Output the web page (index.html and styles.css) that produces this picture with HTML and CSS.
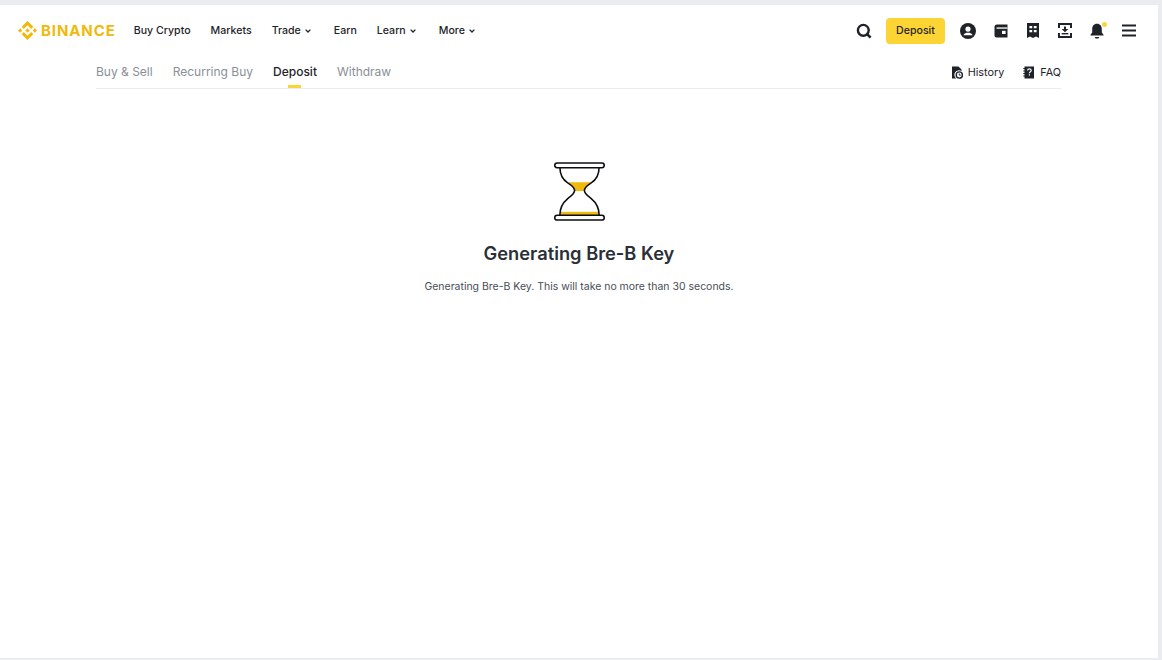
FILE: index.html
```html
<!DOCTYPE html>
<html lang="en">
<head>
<meta charset="utf-8">
<title>Binance</title>
<link rel="stylesheet" href="styles.css">
</head>
<body>
<main class="frame">
  <header class="topbar">
    <div class="brand">
      <svg class="brand-mark" viewBox="0 0 32 32" width="19" height="19" fill="#f0b90b"><path d="M9.8 13.4 L16 7.2 L22.2 13.4 L25.8 9.8 L16 0 L6.2 9.8 Z"/><path d="M0 16 L3.6 12.4 L7.2 16 L3.6 19.6 Z"/><path d="M9.8 18.6 L16 24.8 L22.2 18.6 L25.8 22.2 L16 32 L6.2 22.2 Z"/><path d="M24.8 16 L28.4 12.4 L32 16 L28.4 19.6 Z"/><path d="M19.6 16 L16 12.4 L12.4 16 L16 19.6 Z"/></svg>
      <span class="brand-name">BINANCE</span>
    </div>
    <nav class="mainnav">
      <a>Buy Crypto</a>
      <a>Markets</a>
      <a>Trade<svg class="chev" viewBox="0 0 8 6" width="8" height="6"><path d="M1.6 1.6 L4 4 L6.4 1.6" fill="none" stroke="#1e2329" stroke-width="1.3"/></svg></a>
      <a>Earn</a>
      <a>Learn<svg class="chev" viewBox="0 0 8 6" width="8" height="6"><path d="M1.6 1.6 L4 4 L6.4 1.6" fill="none" stroke="#1e2329" stroke-width="1.3"/></svg></a>
      <a>More<svg class="chev" viewBox="0 0 8 6" width="8" height="6"><path d="M1.6 1.6 L4 4 L6.4 1.6" fill="none" stroke="#1e2329" stroke-width="1.3"/></svg></a>
    </nav>
    <div class="tools">
      <svg class="search" viewBox="0 0 16 16" width="16" height="16"><circle cx="7.3" cy="7.3" r="5.4" fill="none" stroke="#1e2329" stroke-width="2.4"/><path d="M11 11 L14.6 14.6" stroke="#1e2329" stroke-width="2.6"/></svg>
      <button class="deposit-btn">Deposit</button>
      <span class="slot"><svg viewBox="0 0 16 16" width="16" height="16"><circle cx="8" cy="8" r="8" fill="#1e2329"/><circle cx="8" cy="6.1" r="2.6" fill="#fff"/><path d="M3.4 12.3 C4.4 10.3 6 9.8 8 9.8 C10 9.8 11.6 10.3 12.6 12.3 Z" fill="#fff"/></svg></span>
      <span class="slot slot-wide"><svg viewBox="0 0 14 14" width="14" height="14"><path d="M3 0.5 H13.5 V13.5 H2.5 Q0.5 13.5 0.5 11.5 V3 Q0.5 0.5 3 0.5 Z" fill="#1e2329"/><rect x="2.5" y="3.4" width="11" height="1.3" fill="#fff"/><rect x="8" y="6.8" width="3.6" height="3.2" fill="#fff"/></svg></span>
      <span class="slot"><svg viewBox="0 0 12 15" width="12" height="15"><path d="M0 0 H12 V15 L9 13.4 L6 15 L3 13.4 L0 15 Z" fill="#1e2329"/><path d="M2.4 3 H5.2 V5.2 H2.4 Z M6.8 3 H9.6 V5.2 H6.8 Z M2.4 7 H5.2 V9.2 H2.4 Z M6.8 7 H9.6 V9.2 H6.8 Z" fill="#fff"/></svg></span>
      <span class="slot"><svg viewBox="0 0 14 15" width="14" height="15"><path d="M1 5 V1 H13 V5 M1 10 V14 H13 V10" fill="none" stroke="#1e2329" stroke-width="2"/><path d="M6 3.5 H8 V6 H10.3 L7 9.3 L3.7 6 H6 Z" fill="#1e2329"/><rect x="3.7" y="10" width="6.6" height="1.4" fill="#1e2329"/></svg></span>
      <span class="slot">
        <span class="bell">
          <svg viewBox="0 0 14 16" width="14" height="16"><path d="M7 0.8 C3.8 0.8 2.2 3.2 2.2 6 V9.5 L0.5 11.8 V12.4 H13.5 V11.8 L11.8 9.5 V6 C11.8 3.2 10.2 0.8 7 0.8 Z" fill="#1e2329"/><path d="M4.6 14 H9.4 L8.4 15.4 H5.6 Z" fill="#1e2329"/></svg>
          <i class="bell-dot"></i>
        </span>
      </span>
      <span class="slot"><svg viewBox="0 0 14 13" width="14" height="13"><path d="M0 0.6 H14 V2.6 H0 Z M0 5.5 H14 V7.5 H0 Z M0 10.4 H14 V12.4 H0 Z" fill="#1e2329"/></svg></span>
    </div>
  </header>

  <div class="subnav">
    <div class="tabs">
      <a class="tab">Buy &amp; Sell</a>
      <a class="tab">Recurring Buy</a>
      <a class="tab active">Deposit</a>
      <a class="tab">Withdraw</a>
    </div>
    <div class="links">
      <a class="link"><svg viewBox="0 0 12 13" width="12" height="13"><path d="M1 0.5 H7.5 L10.5 3.5 V5.2 A4.2 4.2 0 0 0 5.2 12.5 H1 Z" fill="#1e2329"/><circle cx="8.3" cy="9" r="3.1" fill="none" stroke="#1e2329" stroke-width="1.4"/><path d="M8.3 7.5 V9.2 H9.8" fill="none" stroke="#1e2329" stroke-width="0.9"/></svg>History</a>
      <a class="link"><svg viewBox="0 0 12 13" width="12" height="13"><path d="M1.5 0.5 H11 V12.5 H1.5 Z" fill="#1e2329"/><path d="M0.3 2.5 H2.3 M0.3 5 H2.3 M0.3 7.5 H2.3 M0.3 10 H2.3" stroke="#1e2329" stroke-width="1.1"/><path d="M4.6 4.4 C4.6 2.4 8.2 2.4 8.2 4.4 C8.2 5.8 6.4 5.6 6.4 7.2" fill="none" stroke="#fff" stroke-width="1.2"/><rect x="5.8" y="8.2" width="1.2" height="1.3" fill="#fff"/></svg>FAQ</a>
    </div>
  </div>

  <section class="status">
    <svg class="hourglass" viewBox="0 0 52 58" width="51" height="59" preserveAspectRatio="none">
      <path d="M13.5 20 H38.5 C34 23 31 25 31 28.5 H21 C21 25 18 23 13.5 20 Z" fill="#f0b90b"/>
      <rect x="7" y="49" width="38" height="3.5" fill="#f0b90b"/>
      <path d="M6 5 C6 12 8 17 14 20.5 C18 23 21 25 21 28 C21 31 18 33 14 36 C9 40 6 45 6 52 M46 5 C46 12 44 17 38 20.5 C34 23 31 25 31 28 C31 31 34 33 38 36 C43 40 46 45 46 52" fill="none" stroke="#0b0e11" stroke-width="1.6"/>
      <rect x="0.8" y="1" width="50.4" height="4.6" rx="2.3" fill="#fff" stroke="#0b0e11" stroke-width="1.6"/>
      <rect x="0.8" y="52.4" width="50.4" height="4.6" rx="2.3" fill="#fff" stroke="#0b0e11" stroke-width="1.6"/>
    </svg>
    <h1 class="status-title">Generating Bre-B Key</h1>
    <p class="status-text">Generating Bre-B Key. This will take no more than 30 seconds.</p>
  </section>
</main>
</body>
</html>
```
FILE: styles.css
```css
* { box-sizing: border-box; }
html, body { height: 100%; }
body {
  margin: 0;
  padding: 5px 4px 2px 0;
  background: #eaecef;
  font-family: Inter, "Liberation Sans", sans-serif;
  color: #1e2329;
  overflow: hidden;
}
.frame {
  height: 100%;
  background: #fff;
  display: flex;
  flex-direction: column;
}
.topbar {
  height: 51px;
  display: flex;
  align-items: center;
  padding: 0 13px 0 18px;
  flex: none;
}
.brand { display: flex; align-items: center; gap: 4px; }
.brand-mark { display: block; }
.brand-name {
  font-size: 15px;
  font-weight: 700;
  letter-spacing: 0.9px;
  color: #f0b90b;
}
.mainnav {
  display: flex;
  align-items: center;
  gap: 20px;
  margin-left: 18px;
  font-size: 10.6px;
  font-weight: 500;
}
.mainnav a { display: flex; align-items: center; gap: 3px; }
.chev { margin-right: 2px; }
.tools { margin-left: auto; display: flex; align-items: center; }
.search { margin-right: 14px; }
.deposit-btn {
  width: 59px;
  height: 26px;
  border: 0;
  border-radius: 4px;
  background: #fcd535;
  color: #1e2329;
  font: 500 10.6px Inter, "Liberation Sans", sans-serif;
  margin-right: 7px;
  padding: 0;
}
.slot { width: 32px; display: flex; justify-content: center; align-items: center; flex: none; }
.slot-wide { width: 33px; }
.slot svg { display: block; }
.bell { position: relative; display: block; width: 14px; height: 16px; }
.bell-dot {
  position: absolute;
  top: -1px;
  right: -3px;
  width: 5px;
  height: 5px;
  border-radius: 50%;
  background: #fcd535;
}
.subnav {
  flex: none;
  margin: 0 97px 0 96px;
  height: 33px;
  border-bottom: 1px solid #eaecef;
  display: flex;
  justify-content: space-between;
}
.tabs { display: flex; gap: 20px; font-size: 12px; font-weight: 400; }
.tab { position: relative; color: #8a8f96; line-height: 32px; height: 32px; }
.tab.active { color: #1e2329; font-weight: 500; }
.tab.active::after {
  content: "";
  position: absolute;
  left: 50%;
  bottom: 0;
  width: 13px;
  height: 3px;
  margin-left: -7px;
  background: #fcd535;
}
.links { display: flex; gap: 19px; font-size: 10.8px; font-weight: 400; }
.link { display: flex; align-items: center; gap: 5px; height: 32px; }
.link svg { display: block; }
.status {
  display: flex;
  flex-direction: column;
  align-items: center;
  padding-top: 73px;
}
.hourglass { display: block; }
.status-title {
  margin: 20px 0 0;
  font-size: 18.3px;
  line-height: 24px;
  font-weight: 600;
  color: #2b2f36;
}
.status-text {
  margin: 14px 0 0;
  font-size: 10.48px;
  line-height: 16px;
  color: #474d57;
}
```
